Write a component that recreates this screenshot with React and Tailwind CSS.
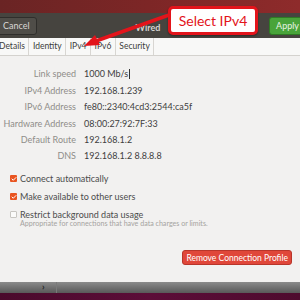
import { Check } from 'lucide-react';

const DETAILS = [
  ['Link speed', '1000 Mb/s'],
  ['IPv4 Address', '192.168.1.239'],
  ['IPv6 Address', 'fe80::2340:4cd3:2544:ca5f'],
  ['Hardware Address', '08:00:27:92:7F:33'],
  ['Default Route', '192.168.1.2'],
  ['DNS', '192.168.1.2 8.8.8.8'],
];

const TABS = ['Details', 'Identity', 'IPv4', 'IPv6', 'Security'];

function CheckRow({ checked, label, hint }) {
  return (
    <div className="flex h-[18px] items-start gap-[3px]">
      <span
        className={
          checked
            ? 'mt-[3px] flex h-[7px] w-[7px] shrink-0 items-center justify-center rounded-[1px] bg-[#e95420]'
            : 'mt-[3px] h-[7px] w-[7px] shrink-0 rounded-[1px] border border-[#c8c6c2] bg-[#fbfbfa]'
        }
      >
        {checked && <Check className="block h-[6px] w-[6px] text-white" strokeWidth={4} />}
      </span>
      <div className="flex flex-col">
        <span className="whitespace-nowrap text-[9px] leading-[13px] text-[#4c4c4c]">{label}</span>
        {hint && (
          <span className="-mt-[1px] whitespace-nowrap text-[7.1px] leading-[8px] text-[#a5a39f]">{hint}</span>
        )}
      </div>
    </div>
  );
}

export default function App() {
  return (
    <div className="relative flex h-[300px] w-[300px] flex-col overflow-hidden font-['Lato',sans-serif]">
      {/* desktop strip */}
      <div className="h-[13px] bg-gradient-to-r from-[#6a2424] via-[#7d2626] to-[#8e2b2b]" />

      {/* header bar */}
      <div className="flex h-[25px] items-center bg-[#46443f]">
        <button className="-ml-[4px] h-[18px] rounded-[3px] border border-[#2f2e2b] bg-[#4f4d48] px-[6px] text-[9px] leading-none text-[#d9d8d5]">
          Cancel
        </button>
        <span className="ml-[99px] mt-[4px] text-[9px] font-bold text-[#d6d5d2]">Wired</span>
        <div className="flex-1" />
        <button className="-mr-[6px] h-[18px] rounded-[3px] border border-[#2f7a24] bg-[#49a43a] px-[6px] text-[9px] leading-none text-[#e8f3e4]">
          Apply
        </button>
      </div>

      {/* tabs */}
      <div className="flex h-[18px] items-stretch border-b border-[#d4d2ce] bg-[#f8f8f7]">
        {TABS.map((t, i) => (
          <div
            key={t}
            className={
              i === 0
                ? '-ml-[2px] flex items-center border-r border-[#d8d6d2] pl-[1px] pr-[3.5px] text-[8.5px] text-[#3c3c3c]'
                : 'flex items-center border-r border-[#d8d6d2] px-[3.5px] text-[8.5px] text-[#3c3c3c]'
            }
          >
            {t}
          </div>
        ))}
      </div>

      {/* content */}
      <div className="relative flex flex-1 flex-col bg-[#f2f1f0] pt-[10px]">
        <div className="grid grid-cols-[76px_1fr] gap-x-[8px]">
          {DETAILS.map(([k, v], i) => (
            <div key={k} className="contents">
              <span className="flex h-[16.4px] items-center justify-end whitespace-nowrap text-[9px] text-[#8f8d89]">
                {k}
              </span>
              <span className="flex h-[16.4px] items-center whitespace-nowrap text-[9px] text-[#3e3e3e]">
                {v}
                {i === 0 && <span className="ml-[1px] h-[10px] w-px bg-[#333]" />}
              </span>
            </div>
          ))}
        </div>

        <div className="ml-[10px] mt-[8px] flex flex-col">
          <CheckRow checked label="Connect automatically" />
          <CheckRow checked label="Make available to other users" />
          <CheckRow
            label="Restrict background data usage"
            hint="Appropriate for connections that have data charges or limits."
          />
        </div>

        <div className="mr-[8px] mt-[24px] flex justify-end">
          <button className="h-[15px] whitespace-nowrap rounded-[3px] border border-[#b8352a] bg-[#e0473a] px-[3px] text-[8.5px] leading-none text-white">
            Remove Connection Profile
          </button>
        </div>
      </div>

      {/* dock / bottom */}
      <div className="relative h-[11px] bg-gradient-to-b from-[#8b8b8b] to-[#595959]">
        <span className="absolute left-[42px] top-[-1px] text-[9px] font-bold leading-[11px] text-[#222]">›</span>
        <span className="absolute left-[56px] top-0 h-full w-px bg-[#7a7a7a]" />
      </div>
      <div className="h-[7px] bg-gradient-to-r from-[#4a0a2c] via-[#5c0d38] to-[#4e0b2e]" />

      {/* callout */}
      <div className="absolute left-[168px] top-[6px] flex h-[29px] w-[90px] items-center justify-center rounded-[5px] border-[3px] border-[#e3141b] bg-white shadow-[0_1px_2px_rgba(0,0,0,0.4)]">
        <span className="text-[14px] leading-none text-[#e3141b]">Select IPv4</span>
      </div>
      <svg className="pointer-events-none absolute left-0 top-0" width="300" height="300">
        <line x1="169" y1="15" x2="96" y2="41" stroke="#e3141b" strokeWidth="3.5" strokeLinecap="round" />
        <polygon points="84,46 95,35 100,45" fill="#e3141b" />
      </svg>
    </div>
  );
}
